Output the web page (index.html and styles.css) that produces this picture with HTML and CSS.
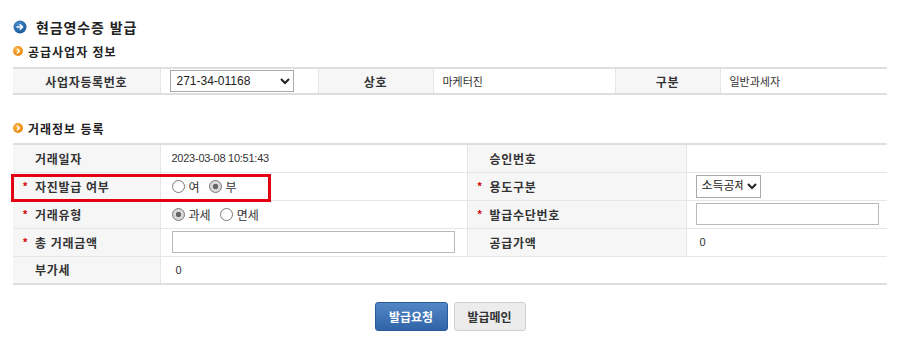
FILE: index.html
```html
<!DOCTYPE html>
<html lang="ko">
<head>
<meta charset="utf-8">
<title>현금영수증 발급</title>
<link rel="stylesheet" href="styles.css">
</head>
<body>
<div class="page">
  <h1 class="title">
    <svg class="ico-plus" width="14" height="14" viewBox="0 0 14 14"><defs><radialGradient id="gb" cx="40%" cy="35%" r="65%"><stop offset="0" stop-color="#4d8fd0"/><stop offset="1" stop-color="#1a5a9c"/></radialGradient></defs><circle cx="7" cy="7" r="6.5" fill="url(#gb)"/><path d="M4 7h5.5M7.2 4.8L9.5 7 7.2 9.2" stroke="#fff" stroke-width="1.5" fill="none" stroke-linecap="round"/></svg>
    현금영수증 발급
  </h1>
  <h2 class="sec">
    <svg class="ico-arrow" width="10" height="10" viewBox="0 0 10 10"><defs><radialGradient id="go" cx="40%" cy="35%" r="65%"><stop offset="0" stop-color="#ffb74a"/><stop offset="1" stop-color="#e8860a"/></radialGradient></defs><circle cx="5" cy="5" r="5" fill="url(#go)"/><path d="M4 2.8L6.2 5 4 7.2" stroke="#fff" stroke-width="1.5" fill="none"/></svg>
    공급사업자 정보
  </h2>
  <table class="tbl tbl1">
    <colgroup><col class="c147"><col class="c158"><col class="c115"><col class="c182"><col class="c105"><col></colgroup>
    <tr>
      <th class="center">사업자등록번호</th>
      <td><select class="sel-biz"><option>271-34-01168</option></select></td>
      <th class="center">상호</th>
      <td>마케터진</td>
      <th class="center">구분</th>
      <td>일반과세자</td>
    </tr>
  </table>

  <h2 class="sec sec2">
    <svg class="ico-arrow" width="10" height="10" viewBox="0 0 10 10"><circle cx="5" cy="5" r="5" fill="url(#go)"/><path d="M4 2.8L6.2 5 4 7.2" stroke="#fff" stroke-width="1.5" fill="none"/></svg>
    거래정보 등록
  </h2>
  <div class="tbl-wrap">
    <table class="tbl tbl2">
      <colgroup><col class="c147"><col class="c307"><col class="c219"><col></colgroup>
      <tr>
        <th>거래일자</th>
        <td class="dt">2023-03-08 10:51:43</td>
        <th>승인번호</th>
        <td></td>
      </tr>
      <tr>
        <th><span class="req">*</span>자진발급 여부</th>
        <td>
          <label class="rd"><input type="radio" name="self"> 여</label>
          <label class="rd"><input type="radio" name="self" checked> 부</label>
        </td>
        <th><span class="req">*</span>용도구분</th>
        <td class="pl9"><select class="sel-use"><option>소득공제</option></select></td>
      </tr>
      <tr>
        <th><span class="req">*</span>거래유형</th>
        <td>
          <label class="rd"><input type="radio" name="tax" checked> 과세</label>
          <label class="rd"><input type="radio" name="tax"> 면세</label>
        </td>
        <th><span class="req">*</span>발급수단번호</th>
        <td class="pl9"><input type="text" class="inp inp-r"></td>
      </tr>
      <tr>
        <th><span class="req">*</span>총 거래금액</th>
        <td><input type="text" class="inp inp-amt"></td>
        <th>공급가액</th>
        <td class="pl13">0</td>
      </tr>
      <tr>
        <th>부가세</th>
        <td class="pl15">0</td>
        <th class="blank"></th>
        <td></td>
      </tr>
    </table>
    <div class="hl"></div>
  </div>

  <div class="btns">
    <button class="btn btn-blue">발급요청</button>
    <button class="btn btn-gray">발급메인</button>
  </div>
</div>
</body>
</html>
```

FILE: styles.css
```css
* { box-sizing: border-box; }
html, body { margin: 0; padding: 0; background: #fff; }
body {
  font-family: "Liberation Sans", "Noto Sans CJK KR", sans-serif;
  font-size: 11px;
  color: #333;
}
.page {
  width: 900px;
  padding: 17px 13px 0 13px;
}
.title {
  margin: 0;
  height: 20px;
  display: flex;
  align-items: center;
  gap: 9px;
  font-size: 14px;
  font-weight: bold;
  color: #222;
  letter-spacing: 0.9px;
}
.sec {
  margin: 6px 0 0 0;
  height: 16px;
  display: flex;
  align-items: center;
  gap: 5px;
  font-size: 12px;
  font-weight: bold;
  color: #222;
  letter-spacing: 1px;
}
.sec2 { margin-top: 25px; }
.tbl {
  width: 874px;
  border-collapse: collapse;
  table-layout: fixed;
  margin-top: 8px;
}
.tbl1 { border-top: 2px solid #dedede; border-bottom: 2px solid #dedede; }
.tbl2 { border-top: 2px solid #dedede; border-bottom: 2px solid #dedede; margin-top: 7px; }
.c147 { width: 147px; }
.c158 { width: 158px; }
.c115 { width: 115px; }
.c182 { width: 182px; }
.c105 { width: 105px; }
.c307 { width: 307px; }
.c219 { width: 219px; }
.tbl th, .tbl td {
  height: 28px;
  padding: 0;
  vertical-align: middle;
  white-space: nowrap;
}
.tbl1 th, .tbl1 td { height: 26px; }
.tbl th {
  background: #f6f6f6;
  font-size: 12px;
  font-weight: bold;
  color: #333;
  text-align: left;
  padding-left: 22px;
  letter-spacing: 0.7px;
  border-left: 1px solid #e6e6e6;
  border-right: 1px solid #e6e6e6;
  position: relative;
}
.tbl th:first-child { border-left: none; }
.tbl th.center { text-align: center; padding-left: 0; }
.tbl td { padding-left: 11px; color: #333; }
.tbl td.dt { letter-spacing: -0.25px; }
.tbl1 td { padding-left: 9px; }
.tbl2 tr + tr th, .tbl2 tr + tr td { border-top: 1px solid #e6e6e6; }
.tbl2 th.blank { background: #fff; border-left: none; border-right: none; }
.pl9 { padding-left: 9px !important; }
.pl13 { padding-left: 13px !important; }
.pl15 { padding-left: 15px !important; }
.req {
  position: absolute;
  left: 10px;
  top: 50%;
  transform: translateY(-50%);
  color: #d20000;
  font-size: 11px;
  font-weight: bold;
}
select {
  font-family: "Liberation Sans", "Noto Sans CJK KR", sans-serif;
  font-size: 12px;
  color: #222;
  border: 1px solid #a9a9a9;
  background: #fff;
  border-radius: 0;
  height: 22px;
  padding: 0 2px;
}
.sel-biz { width: 124px; }
.sel-use { width: 65px; height: 23px; padding: 0 1px; font-size: 12px; }
.inp {
  border: 1px solid #b9b9b9;
  height: 22px;
  border-radius: 0;
  padding: 0 3px;
  font-size: 12px;
  display: block;
}
.inp-amt { width: 283px; }
.inp-r { width: 183px; }
.rd {
  display: inline-flex;
  align-items: center;
  margin-right: 6px;
  font-size: 12px;
  color: #333;
}
.rd input {
  appearance: none;
  -webkit-appearance: none;
  width: 13px;
  height: 13px;
  border: 1px solid #7a7a7a;
  border-radius: 50%;
  margin: 0 4px 0 0;
  background: #fff;
  position: relative;
}
.rd input:checked {
  background: radial-gradient(circle, #666 0 2.5px, #d8d8d8 3px);
}
.tbl-wrap { position: relative; }
.hl {
  position: absolute;
  left: -2px;
  top: 31px;
  width: 260px;
  height: 28px;
  border: 3px solid #e20012;
  pointer-events: none;
}
.btns {
  display: flex;
  justify-content: center;
  gap: 6px;
  margin-top: 17px;
}
.btn {
  height: 29px;
  width: 73px;
  font-family: "Noto Sans CJK KR", sans-serif;
  font-size: 12px;
  font-weight: bold;
  border-radius: 3px;
  padding: 0;
  cursor: pointer;
}
.btn-blue {
  color: #fff;
  background: linear-gradient(#5386c4, #2f64a8);
  border: 1px solid #2a5a98;
}
.btn-gray {
  color: #333;
  background: #ececec;
  border: 1px solid #cfcfcf;
  width: 72px;
}
```
